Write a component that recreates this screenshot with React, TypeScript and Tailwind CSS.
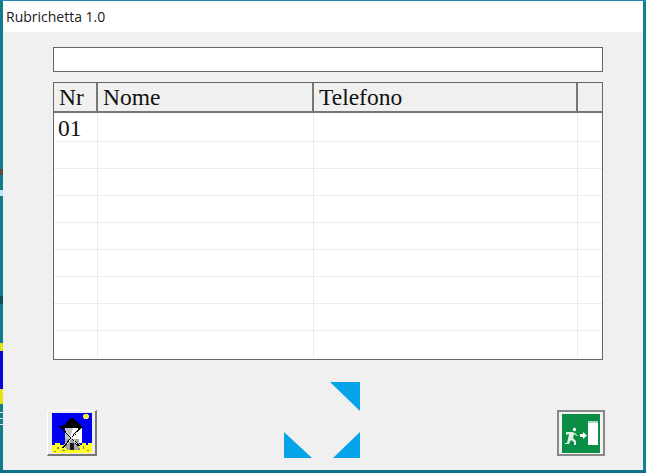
import React from 'react';

const rows = ['01', '', '', '', '', '', '', '', ''];

const Mill = () => (
  <svg width="40" height="40" viewBox="0 0 40 40" shapeRendering="crispEdges">
    <rect width="40" height="40" fill="#0000f0" />
    <circle cx="34" cy="3.5" r="3" fill="#f5e642" />
    <rect x="0" y="32" width="40" height="8" fill="#ffff20" />
    <path d="M0 32h3v-2h5v2h4v-1h16v1h2v-2h4v2h2v-2h4v2z" fill="#ffff20" />
    <path d="M5 34h2v2H5zM10 37h3v1h-3zM2 38h2v1H2zM26 35h2v2h-2zM31 33h1v3h-1zM35 37h2v1h-2z" fill="#7a7a90" />
    <path d="M20 5l3 2 8 8H9l2-3 3-1 3-5z" fill="#000" />
    <rect x="13" y="15" width="17" height="15" fill="#fff" />
    <path d="M13 15h8l-2 7 2 7h-8z" fill="#c4c4c4" />
    <path d="M13 26h14v9l-2 2H15l-2-2z" fill="#a6a6a6" />
    <rect x="18" y="30" width="4" height="7" fill="#1c1c1c" />
    <path d="M8 13l19 20M28 15L11 35" stroke="#000" strokeWidth="1.6" fill="none" />
    <path d="M14 19l6 6M25 19l-5 6M15 31l5-6M25 31l-5-6" stroke="#fff" strokeWidth="0.9" fill="none" />
  </svg>
);

const ExitSign = () => (
  <svg width="38" height="39" viewBox="0 0 38 39">
    <rect width="38" height="39" fill="#0a8d45" />
    <rect x="26" y="7" width="10" height="24" fill="#fff" />
    <rect x="26" y="7" width="10" height="2" fill="#a9d8bc" />
    <path d="M18 20h3v-2l4 3.5-4 3.5v-2h-3z" fill="#fff" />
    <circle cx="12.5" cy="15.5" r="1.7" fill="#fff" />
    <path d="M4 18h6l3 1 3 3h-1l-3-2-1 4 3 3v4h-2v-3l-3-2-2 4H3v-1h2l1-4 1-5-3 1z" fill="#dff0e4" />
  </svg>
);

const Arrows = () => (
  <svg width="76" height="76" viewBox="0 0 76 76">
    <path d="M46 0h30v29z" fill="#05a4e8" />
    <path d="M0 50v26h28z" fill="#05a4e8" />
    <path d="M76 50v26H49z" fill="#05a4e8" />
  </svg>
);

const App: React.FC = () => {
  return (
    <div
      className="w-[646px] h-[473px] overflow-hidden flex flex-col bg-[#0f7188] border-t border-t-[#2a84b8]"
      style={{ fontFamily: '"Liberation Serif", serif' }}
    >
      <div className="flex h-[469px]">
        {/* desktop showing through the left edge of the window */}
        <div className="w-[3px] shrink-0 flex flex-col bg-[#127c8b]">
          <div className="h-[168px]" />
          <div className="h-[6px] bg-[#5a4a4a]" />
          <div className="h-[15px]" />
          <div className="h-[6px] bg-[#bfe6f2]" />
          <div className="h-[100px]" />
          <div className="h-[8px] bg-[#0e4f5c]" />
          <div className="h-[39px]" />
          <div className="h-[8px] bg-[#e4e40c]" />
          <div className="h-[38px] bg-[#0606d8]" />
          <div className="h-[15px] bg-[#e4e40c]" />
          <div className="h-[8px]" />
          <div className="h-[1px] bg-[#cfe3e8]" />
          <div className="h-[5px]" />
          <div className="h-[1px] bg-[#cfe3e8]" />
          <div className="h-[5px]" />
          <div className="h-[1px] bg-[#cfe3e8]" />
        </div>

        <div className="flex-1 flex flex-col bg-[#f0f0f0]">
          <div
            className="h-[31px] bg-white pl-[3px] flex items-center text-[14px] text-[#1a1a1a]"
            style={{ fontFamily: '"Open Sans", sans-serif' }}
          >
            Rubrichetta 1.0
          </div>

          <div className="pl-[50px] pr-[40px] pt-[15px]">
            <div className="h-[25px] bg-white border border-[#666]" />
            <div className="mt-[10px] h-[278px] bg-white border border-[#666] text-[23.5px] text-[#111]">
              <div className="flex h-[30px] bg-[#f0f0f0] border-b-2 border-b-[#777] leading-[29px]">
                <div className="w-[44px] pl-[5px] border-r-2 border-r-[#777]">Nr</div>
                <div className="w-[216px] pl-[5px] border-r-2 border-r-[#777]">Nome</div>
                <div className="w-[264px] pl-[5px] border-r-2 border-r-[#777]">Telefono</div>
                <div className="flex-1" />
              </div>
              {rows.map((r, i) => (
                <div
                  key={i}
                  className={`flex ${i === 0 ? 'h-[29px] leading-[30px]' : 'h-[27px]'} ${i < 8 ? 'border-b border-b-[#ececec]' : ''}`}
                >
                  <div className="w-[44px] pl-[4px] border-r border-r-[#ececec]">{r}</div>
                  <div className="w-[216px] border-r border-r-[#ececec]" />
                  <div className="w-[264px] border-r border-r-[#ececec]" />
                  <div className="flex-1" />
                </div>
              ))}
            </div>
          </div>

          <div className="flex items-start pl-[44px] pr-[38px]">
            <div className="mt-[50px] w-[50px] h-[46px] flex items-center justify-center bg-[#ececec] border border-white border-r-2 border-b-2 border-r-[#777] border-b-[#777]">
              <Mill />
            </div>
            <div className="ml-[187px] mt-[22px]">
              <Arrows />
            </div>
            <div className="ml-auto mt-[50px] w-[48px] h-[46px] flex items-center justify-center bg-[#f4f4f4] border-2 border-[#888]">
              <ExitSign />
            </div>
          </div>
        </div>

        <div className="w-[3px] shrink-0 bg-[#17808f]" />
      </div>
    </div>
  );
};

export default App;
